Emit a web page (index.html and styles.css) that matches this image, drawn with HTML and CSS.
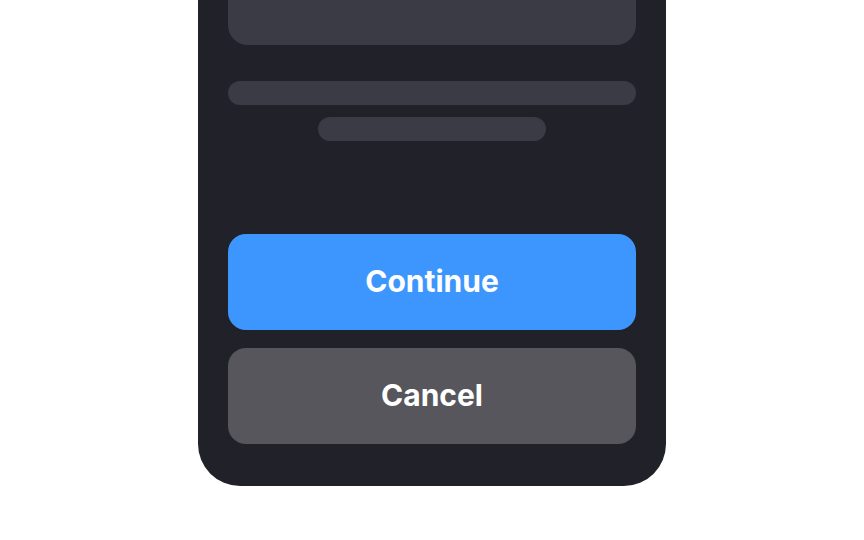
FILE: index.html
```html
<!DOCTYPE html>
<html lang="en">
<head>
  <meta charset="UTF-8">
  <meta name="viewport" content="width=device-width, initial-scale=1.0">
  <title>Confirm Sheet</title>
  <link rel="stylesheet" href="styles.css">
</head>
<body>

  <!-- Phone sheet -->
  <div class="sheet">
    <div class="skeleton-media"></div>

    <div class="skeleton-text">
      <div class="skeleton-line"></div>
      <div class="skeleton-line short"></div>
    </div>

    <div class="actions">
      <button class="btn btn-primary">Continue</button>
      <button class="btn btn-secondary">Cancel</button>
    </div>
  </div>

</body>
</html>
```

FILE: styles.css
```css
/* General Styles */
* {
  margin: 0;
  padding: 0;
  box-sizing: border-box;
}

body {
  font-family: Inter, "Liberation Sans", Arial, sans-serif;
  background-color: #ffffff;
  height: 100vh;
  overflow: hidden;
  display: flex;
  justify-content: center;
  align-items: flex-start;
}

/* Sheet */
.sheet {
  width: 468px;
  margin-top: -145px; /* top of the sheet runs off screen */
  padding: 30px 30px 42px;
  background-color: #212129;
  border-radius: 0 0 42px 42px;
  display: flex;
  flex-direction: column;
}

.skeleton-media {
  height: 160px;
  background-color: #3b3b45;
  border-radius: 20px;
}

.skeleton-text {
  margin-top: 36px;
  display: flex;
  flex-direction: column;
  align-items: center;
  gap: 12px;
}

.skeleton-line {
  width: 100%;
  height: 24px;
  background-color: #3b3b45;
  border-radius: 12px;
}

.skeleton-line.short {
  width: 228px;
}

/* Buttons */
.actions {
  margin-top: 93px;
  display: flex;
  flex-direction: column;
  gap: 18px;
}

.btn {
  height: 96px;
  padding-bottom: 2px;
  border: none;
  border-radius: 18px;
  font-family: inherit;
  font-size: 30px;
  font-weight: 700;
  color: #ffffff;
}

.btn-primary {
  background-color: #3d96fd;
}

.btn-secondary {
  background-color: #56565c;
}
```
